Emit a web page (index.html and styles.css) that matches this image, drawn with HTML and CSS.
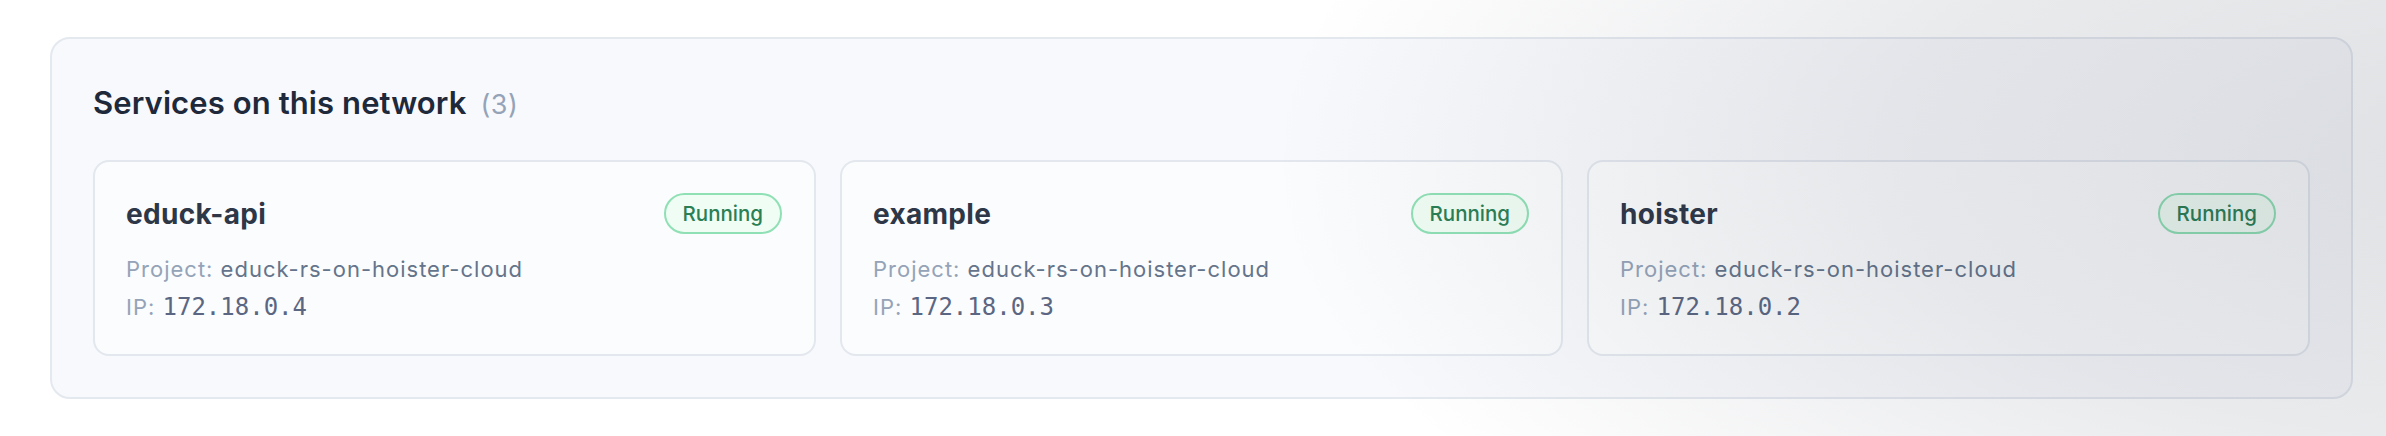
FILE: index.html
```html
<!DOCTYPE html>
<html lang="en">

<head>
    <meta charset="UTF-8">
    <meta name="viewport" content="width=device-width, initial-scale=1.0">
    <title>Network - Services</title>
    <link rel="stylesheet" href="styles.css">
</head>

<body>

    <div class="page">

        <!-- Services Panel -->
        <div class="panel">
            <h2 class="panel-title">Services on this network <span class="count">(3)</span></h2>

            <div class="service-grid">
                <div class="service-card">
                    <div class="service-head">
                        <span class="service-name">educk-api</span>
                        <span class="status">Running</span>
                    </div>
                    <div class="meta"><span class="label">Project:</span> educk-rs-on-hoister-cloud</div>
                    <div class="meta"><span class="label">IP:</span> <code class="ip">172.18.0.4</code></div>
                </div>

                <div class="service-card">
                    <div class="service-head">
                        <span class="service-name">example</span>
                        <span class="status">Running</span>
                    </div>
                    <div class="meta"><span class="label">Project:</span> educk-rs-on-hoister-cloud</div>
                    <div class="meta"><span class="label">IP:</span> <code class="ip">172.18.0.3</code></div>
                </div>

                <div class="service-card">
                    <div class="service-head">
                        <span class="service-name">hoister</span>
                        <span class="status">Running</span>
                    </div>
                    <div class="meta"><span class="label">Project:</span> educk-rs-on-hoister-cloud</div>
                    <div class="meta"><span class="label">IP:</span> <code class="ip">172.18.0.2</code></div>
                </div>
            </div>
        </div>

    </div>

    <!-- shaded backdrop on the right -->
    <div class="shade"></div>

</body>

</html>
```

FILE: styles.css
```css
body {
    font-family: Inter, "Noto Sans", sans-serif;
    background: #ffffff;
    margin: 0;
}

.page {
    padding: 37px 33px 37px 50px;
}

/* Outer panel */
.panel {
    background: #f8f9fc;
    border: 2px solid #e4e8ef;
    border-radius: 20px;
    padding: 46px 41px 41px 41px;
}

.panel-title {
    margin: 0 0 37px 0;
    font-size: 31px;
    line-height: 36px;
    font-weight: 600;
    letter-spacing: 0.1px;
    color: #1e293b;
}

.count {
    margin-left: 6px;
    font-size: 27px;
    font-weight: 400;
    letter-spacing: 0.5px;
    color: #94a3b8;
}

.service-grid {
    display: grid;
    grid-template-columns: repeat(3, 1fr);
    gap: 24px;
}

/* Service card */
.service-card {
    background: #fbfcfd;
    border: 2px solid #e3e7ee;
    border-radius: 16px;
    padding: 31px 32px 32px 31px;
}

.service-head {
    display: flex;
    justify-content: space-between;
    align-items: center;
    margin-bottom: 20px;
}

.service-name {
    font-size: 28px;
    line-height: 36px;
    font-weight: 650;
    letter-spacing: 0.3px;
    color: #2d3748;
}

.status {
    height: 41px;
    box-sizing: border-box;
    display: flex;
    align-items: center;
    padding: 0 17px;
    font-size: 20.5px;
    font-weight: 500;
    color: #2a7f55;
    background: #f0fdf4;
    border: 2px solid #8fe0b5;
    border-radius: 21px;
}

.meta {
    font-size: 22px;
    line-height: 30px;
    letter-spacing: 1px;
    color: #64748b;
    margin-bottom: 8px;
}

.meta:last-child {
    margin-bottom: 0;
}

.label {
    color: #94a3b8;
}

.ip {
    font-family: "DejaVu Sans Mono", "Liberation Mono", monospace;
    font-size: 24px;
    line-height: 30px;
    letter-spacing: 0;
    color: #5b6782;
}

.shade {
    position: absolute;
    top: 0;
    left: 0;
    width: 100%;
    height: 436px;
    pointer-events: none;
    background: radial-gradient(ellipse 1250px 560px at 2520px 160px, rgba(40, 50, 70, 0.15) 0%, rgba(40, 50, 70, 0.1) 50%, rgba(40, 50, 70, 0) 100%);
}
```
